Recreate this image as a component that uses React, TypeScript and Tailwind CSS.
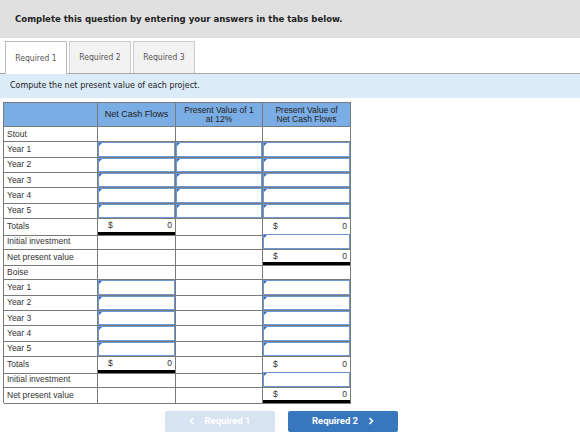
import React from "react";

type Cell = "" | "input" | "total" | "totalThick";

type Row = { label: string; cells: Cell[] };

const stout: Row[] = [
  { label: "Stout", cells: ["", "", ""] },
  { label: "Year 1", cells: ["input", "input", "input"] },
  { label: "Year 2", cells: ["input", "input", "input"] },
  { label: "Year 3", cells: ["input", "input", "input"] },
  { label: "Year 4", cells: ["input", "input", "input"] },
  { label: "Year 5", cells: ["input", "input", "input"] },
  { label: "Totals", cells: ["totalThick", "", "total"] },
  { label: "Initial investment", cells: ["", "", "input"] },
  { label: "Net present value", cells: ["", "", "totalThick"] },
];

const boise: Row[] = [
  { label: "Boise", cells: ["", "", ""] },
  { label: "Year 1", cells: ["input", "", "input"] },
  { label: "Year 2", cells: ["input", "", "input"] },
  { label: "Year 3", cells: ["input", "", "input"] },
  { label: "Year 4", cells: ["input", "", "input"] },
  { label: "Year 5", cells: ["input", "", "input"] },
  { label: "Totals", cells: ["totalThick", "", "total"] },
  { label: "Initial investment", cells: ["", "", "input"] },
  { label: "Net present value", cells: ["", "", "totalThick"] },
];

const rows = [...stout, ...boise];

const InputBox = () => (
  <div className="relative h-full w-full border-[1.5px] border-[#6d9ad6] bg-white">
    <div className="absolute left-0 top-0 h-0 w-0 border-l-[3px] border-b-[3px] border-l-[#2f6fc4] border-b-transparent" />
  </div>
);

const TotalBox = ({ thick }: { thick: boolean }) => (
  <div
    className={`flex h-full w-full items-center justify-between pl-[10px] pr-[3px] ${
      thick ? "border-b-[3px] border-black" : "border-b border-[#333]"
    }`}
  >
    <span>$</span>
    <span>0</span>
  </div>
);

const Chevron = ({ left }: { left?: boolean }) => (
  <svg width="6" height="8" viewBox="0 0 6 8" className="shrink-0">
    <path
      d={left ? "M4.5 1 L1.5 4 L4.5 7" : "M1.5 1 L4.5 4 L1.5 7"}
      fill="none"
      stroke="white"
      strokeWidth="1.6"
    />
  </svg>
);

const App = () => {
  return (
    <div className="h-[433px] w-[580px] overflow-hidden bg-white font-['DejaVu_Sans_Condensed','DejaVu_Sans',sans-serif]">
      <div className="flex h-[38px] items-center bg-[#e0e0e0] pl-[15px] text-[9.5px] font-bold text-[#222]">
        Complete this question by entering your answers in the tabs below.
      </div>

      <div className="mt-[4px] flex h-[32px] items-end gap-[2px] border-b border-[#a9a9a9] pl-[5px] text-[8.5px] text-[#555]">
        <div className="-mb-px flex h-[33px] w-[62px] items-center justify-center border border-b-0 border-[#bbb] bg-white">
          Required 1
        </div>
        <div className="flex h-[32px] w-[62px] items-center justify-center border border-b-0 border-[#ccc] bg-[#f2f2f2]">
          Required 2
        </div>
        <div className="flex h-[32px] w-[62px] items-center justify-center border border-b-0 border-[#ccc] bg-[#f2f2f2]">
          Required 3
        </div>
      </div>

      <div className="flex h-[24px] items-center bg-[#dcebf8] pl-[10px] text-[8.9px] text-[#222]">
        Compute the net present value of each project.
      </div>

      <div className="ml-[3px] mt-[4px] w-[348px] border-l border-t border-[#7a7a7a] font-['Liberation_Sans',Arial,sans-serif] text-[8.5px] text-[#333]">
        <div className="grid h-[24px] grid-cols-[94px_78px_87px_88px] bg-[#7aade3] text-[#222]">
          <div className="border-b border-r border-[#7a7a7a]" />
          <div className="flex items-center justify-center border-b border-r border-[#7a7a7a] text-[9px]">
            Net Cash Flows
          </div>
          <div className="flex items-center justify-center border-b border-r border-[#7a7a7a] text-center leading-[9px]">
            Present Value of 1
            <br />
            at 12%
          </div>
          <div className="flex items-center justify-center border-b border-r border-[#7a7a7a] text-center leading-[9px]">
            Present Value of
            <br />
            Net Cash Flows
          </div>
        </div>

        {rows.map((row, i) => (
          <div key={i} className="grid h-[15.33px] grid-cols-[94px_78px_87px_88px]">
            <div className="flex items-center border-b border-r border-[#7a7a7a] pl-[3px]">{row.label}</div>
            {row.cells.map((c, j) => (
              <div key={j} className="border-b border-r border-[#7a7a7a]">
                {c === "input" && <InputBox />}
                {c === "total" && <TotalBox thick={false} />}
                {c === "totalThick" && <TotalBox thick={true} />}
              </div>
            ))}
          </div>
        ))}
      </div>

      <div className="mt-[8px] flex gap-[13px] pl-[165px] font-['Roboto',sans-serif] text-[9.5px] font-bold text-white">
        <button className="flex h-[21px] w-[110px] items-center justify-center gap-[9px] rounded-[2px] bg-[#d7e3f1]">
          <Chevron left />
          <span>Required 1</span>
        </button>
        <button className="flex h-[21px] w-[110px] items-center justify-center gap-[10px] rounded-[2px] bg-[#3777bd]">
          <span>Required 2</span>
          <Chevron />
        </button>
      </div>
    </div>
  );
};

export default App;
